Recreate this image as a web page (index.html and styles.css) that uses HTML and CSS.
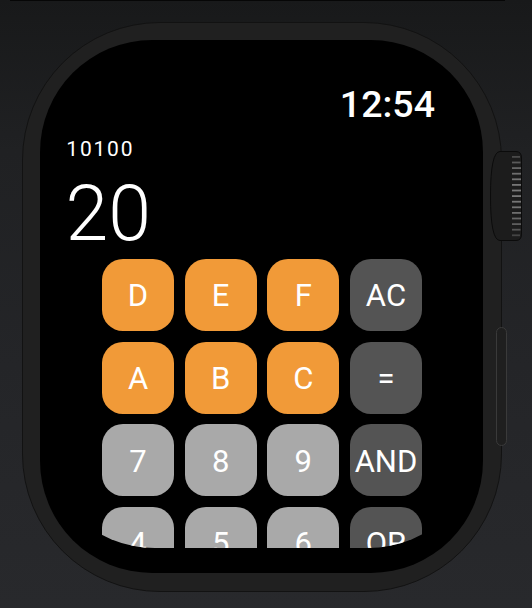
FILE: index.html
```html
<!DOCTYPE html>
<html lang="en">
<head>
<meta charset="utf-8">
<title>Calculator</title>
<link rel="stylesheet" href="styles.css">
</head>
<body>
<div class="strap"></div>
<div class="watch">
  <div class="screen">
    <div class="content">
      <div class="status"><span class="time">12:54</span></div>
      <div class="sub">10100</div>
      <div class="value">20</div>
      <div class="keypad">
        <div class="key hex">D</div>
        <div class="key hex">E</div>
        <div class="key hex">F</div>
        <div class="key op">AC</div>
        <div class="key hex">A</div>
        <div class="key hex">B</div>
        <div class="key hex">C</div>
        <div class="key op">=</div>
        <div class="key num">7</div>
        <div class="key num">8</div>
        <div class="key num">9</div>
        <div class="key op">AND</div>
        <div class="key num">4</div>
        <div class="key num">5</div>
        <div class="key num">6</div>
        <div class="key op">OR</div>
      </div>
    </div>
  </div>
  <svg class="crown" width="34" height="92" viewBox="0 0 34 92">
    <path d="M11 1.5 H27 Q32.5 1.5 32.5 8 V84 Q32.5 90.5 27 90.5 H11 Q1.5 90.5 1.5 46 Q1.5 1.5 11 1.5 Z" fill="#1c1c1c" stroke="#0b0b0b"/>
    <g>
      <rect x="23" y="6" width="8" height="1.8" fill="#4a4a4a"/>
      <rect x="23" y="11.6" width="8.5" height="1.8" fill="#5a5a5a"/>
      <rect x="23" y="17.2" width="9" height="1.8" fill="#666"/>
      <rect x="23" y="22.8" width="9" height="1.8" fill="#6e6e6e"/>
      <rect x="23" y="28.4" width="9" height="1.8" fill="#737373"/>
      <rect x="23" y="34" width="9" height="1.8" fill="#767676"/>
      <rect x="23" y="39.6" width="9" height="1.8" fill="#787878"/>
      <rect x="23" y="45.2" width="9" height="1.8" fill="#787878"/>
      <rect x="23" y="50.8" width="9" height="1.8" fill="#767676"/>
      <rect x="23" y="56.4" width="9" height="1.8" fill="#737373"/>
      <rect x="23" y="62" width="9" height="1.8" fill="#6e6e6e"/>
      <rect x="23" y="67.6" width="9" height="1.8" fill="#666"/>
      <rect x="23" y="73.2" width="9" height="1.8" fill="#5e5e5e"/>
      <rect x="23" y="78.8" width="8.5" height="1.8" fill="#545454"/>
      <rect x="23" y="84.4" width="8" height="1.8" fill="#444"/>
    </g>
  </svg>
  <div class="side-button"></div>
</div>
</body>
</html>
```
FILE: styles.css
```css
html, body {
  margin: 0;
  padding: 0;
}
body {
  width: 532px;
  height: 608px;
  overflow: hidden;
  background: linear-gradient(180deg, #18191a 0%, #202123 25%, #242528 60%, #28292c 100%);
  font-family: Roboto, "Liberation Sans", sans-serif;
}
.strap {
  height: 1px;
  margin: 0 27px 0 10px;
  background: #060606;
}
.watch {
  position: relative;
  box-sizing: border-box;
  width: 480px;
  height: 570px;
  margin: 21px 0 0 22px;
  padding: 17px 18px 18px 17px;
  background: #202020;
  border: 1px solid #121212;
  border-radius: 138px;
}
.screen {
  width: 443px;
  height: 533px;
  background: #000;
  border-radius: 112px;
  overflow: hidden;
}
.content {
  height: 508px;
  overflow: hidden;
  border-radius: 0 0 115px 115px;
  color: #fff;
}
.status {
  display: flex;
  justify-content: flex-end;
  padding: 43.9px 48px 0 0;
}
.time {
  font-size: 37.5px;
  line-height: 40px;
  font-weight: 500;
}
.sub {
  margin-top: 13.6px;
  padding-left: 26.3px;
  font-size: 21px;
  line-height: 24px;
  letter-spacing: 1.8px;
}
.value {
  margin-top: 12.2px;
  padding-left: 25.5px;
  font-size: 77px;
  line-height: 80px;
  font-weight: 300;
}
.keypad {
  margin: 5.3px 0 0 62px;
  width: 320px;
  display: grid;
  grid-template-columns: repeat(4, 72px);
  grid-auto-rows: 72px;
  gap: 10.67px;
}
.key {
  display: flex;
  align-items: center;
  justify-content: center;
  box-sizing: border-box;
  padding-top: 2px;
  border-radius: 21px;
  font-size: 31px;
  color: #fff;
  white-space: nowrap;
}
.hex { background: #f19a38; }
.op { background: #545454; }
.num { background: #a9a9a9; }
.crown {
  position: absolute;
  left: 466px;
  top: 127px;
  display: block;
}
.side-button {
  position: absolute;
  left: 473px;
  top: 304px;
  width: 11px;
  height: 119px;
  box-sizing: border-box;
  background: #1f1f1f;
  border: 1px solid #3a3a3a;
  border-radius: 6px;
}
```
